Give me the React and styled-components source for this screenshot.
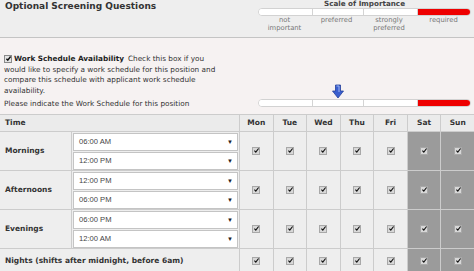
import React from 'react';
import styled, {createGlobalStyle} from 'styled-components';

const Global = createGlobalStyle`
    body {
        margin: 0;
        background: #f6f2f2;
        font-family: "DejaVu Sans", Verdana, sans-serif;
        color: #222;
    }
`;

const Page = styled.div`
    width: 474px;
    height: 271px;
    overflow: hidden;
    background: #f6f2f2;
`;

const Header = styled.div`
    display: flex;
    justify-content: space-between;
    height: 37px;
    background: #eeeeee;
    border-bottom: 1px solid #c4c4c4;
`;

const Title = styled.div`
    padding: 1px 0 0 5px;
    font-size: 9px;
    font-weight: bold;
    color: #333;
`;

const Scale = styled.div`
    width: 213px;
    margin-right: 3px;
    display: flex;
    flex-direction: column;
`;

const ScaleTitle = styled.div`
    font-size: 7.2px;
    font-weight: bold;
    text-align: center;
    line-height: 8px;
    color: #444;
`;

const Bar = styled.div`
    display: flex;
    height: 6px;
    border: 1px solid #d2d2d2;
    border-radius: 4px;
    overflow: hidden;
    background: #fff;
`;

const Seg = styled.div`
    width: ${p => p.$w}px;
    background: ${p => (p.$red ? '#ee0000' : '#ffffff')};
    border-left: ${p => (p.$first ? 'none' : '1px solid #d4d4d4')};
    flex: ${p => (p.$red ? 1 : 'none')};
`;

const Labels = styled.div`
    display: flex;
    font-size: 6.8px;
    line-height: 7.5px;
    color: #777;
    text-align: center;
    margin-top: 1px;
`;

const Label = styled.div`
    width: ${p => p.$w}px;
    flex: ${p => (p.$last ? 1 : 'none')};
`;

const Body = styled.div`
    padding: 16px 0 0 4px;
`;

const Para = styled.div`
    width: 218px;
    font-size: 7.3px;
    line-height: 10.7px;
    color: #333;
`;

const Strong = styled.b`
    color: #222;
    margin-right: 4px;
`;

const IndicateRow = styled.div`
    display: flex;
    align-items: center;
    justify-content: space-between;
    height: 11px;
    margin-top: 1px;
`;

const Indicate = styled.div`
    font-size: 7.3px;
    color: #333;
`;

const Slider = styled.div`
    position: relative;
    width: 213px;
    margin-right: 3px;
`;

const Marker = styled.svg`
    position: absolute;
    left: 74px;
    top: -15px;
`;

const Box = styled.span`
    display: inline-block;
    width: 6px;
    height: 6px;
    border: 1px solid ${p => (p.$soft ? '#a8a8a8' : '#8a8a8a')};
    background: ${p => (p.$soft ? '#d8d8d8' : '#e4e4e4')};
    vertical-align: middle;
    position: relative;
    margin-right: ${p => p.$mr || 0}px;
    & svg {
        position: absolute;
        left: 0;
        top: -1px;
    }
`;

const Grid = styled.div`
    margin-top: 5px;
    display: grid;
    grid-template-columns: 71px 167px repeat(7, 1fr);
    grid-template-rows: 16px 38px 38px 38px 24px;
    gap: 1px;
    background: #cccccc;
    border-top: 1px solid #cccccc;
`;

const Cell = styled.div`
    background: ${p => (p.$weekend ? '#9b9b9b' : p.$head ? '#ebebeb' : '#eeeeee')};
    grid-column: ${p => p.$span || 'auto'};
    display: flex;
    align-items: center;
    justify-content: ${p => (p.$center ? 'center' : 'flex-start')};
    padding-left: ${p => (p.$center ? 0 : 5)}px;
    font-size: 7.5px;
    font-weight: ${p => (p.$bold ? 'bold' : 'normal')};
    color: #333;
`;

const SelectCell = styled.div`
    background: #eeeeee;
    display: flex;
    flex-direction: column;
    gap: 1px;
    padding: 1px 1px 0 1px;
`;

const Select = styled.div`
    height: 17px;
    background: #ffffff;
    border: 1px solid #c4c4c4;
    display: flex;
    align-items: center;
    justify-content: space-between;
    padding: 0 4px 0 5px;
    font-family: "Liberation Sans", Arial, sans-serif;
    font-size: 7.6px;
    color: #444;
`;

const Arrow = styled.span`
    font-size: 6px;
    color: #222;
`;

const Tick = ({width}) => (
    <svg width="7" height="7" viewBox="0 0 7 7">
        <path d="M1.4 3.7 L2.8 5.1 L5.6 1.5" fill="none" stroke="#111" strokeWidth={width} />
    </svg>
);

const CheckBox = ({soft, mr}) => (
    <Box $soft={soft} $mr={mr}>
        <Tick width={soft ? 1.1 : 1.4} />
    </Box>
);

const days = ['Mon', 'Tue', 'Wed', 'Thu', 'Fri', 'Sat', 'Sun'];

const rows = [
    {name: 'Mornings', times: ['06:00 AM', '12:00 PM']},
    {name: 'Afternoons', times: ['12:00 PM', '06:00 PM']},
    {name: 'Evenings', times: ['06:00 PM', '12:00 AM']},
];

const ScaleBar = () => (
    <Bar>
        <Seg $w={53} $first />
        <Seg $w={50} />
        <Seg $w={53} />
        <Seg $red />
    </Bar>
);

const DayCells = () =>
    days.map((d, i) => (
        <Cell key={d} $center $weekend={i > 4}>
            <CheckBox soft />
        </Cell>
    ));

export default function App() {
    return (
        <Page>
            <Global />
            <Header>
                <Title>Optional Screening Questions</Title>
                <Scale>
                    <ScaleTitle>Scale of Importance</ScaleTitle>
                    <ScaleBar />
                    <Labels>
                        <Label $w={53}>not<br />important</Label>
                        <Label $w={51}>preferred</Label>
                        <Label $w={54}>strongly<br />preferred</Label>
                        <Label $last>required</Label>
                    </Labels>
                </Scale>
            </Header>
            <Body>
                <Para>
                    <CheckBox mr={2} />
                    <Strong>Work Schedule Availability</Strong>Check this box if you
                    would like to specify a work schedule for this position and compare this
                    schedule with applicant work schedule availability.
                </Para>
                <IndicateRow>
                    <Indicate>Please indicate the Work Schedule for this position</Indicate>
                    <Slider>
                        <Marker width="12" height="15" viewBox="0 0 12 15">
                            <path d="M3.5 1 H8.5 V7 H11.5 L6 14 L0.5 7 H3.5 Z" fill="#3a5fcf" stroke="#24409a" strokeWidth="0.8" />
                            <path d="M4.5 2 H7 V8" fill="none" stroke="#9fb6f0" strokeWidth="1" />
                        </Marker>
                        <ScaleBar />
                    </Slider>
                </IndicateRow>
            </Body>
            <Grid>
                <Cell $head $bold $span="span 2">Time</Cell>
                {days.map(d => (
                    <Cell key={d} $head $bold $center>{d}</Cell>
                ))}
                {rows.map(r => (
                    <React.Fragment key={r.name}>
                        <Cell $bold>{r.name}</Cell>
                        <SelectCell>
                            {r.times.map(t => (
                                <Select key={t}>
                                    {t}
                                    <Arrow>▼</Arrow>
                                </Select>
                            ))}
                        </SelectCell>
                        <DayCells />
                    </React.Fragment>
                ))}
                <Cell $bold $span="span 2">Nights (shifts after midnight, before 6am)</Cell>
                <DayCells />
            </Grid>
        </Page>
    );
}
